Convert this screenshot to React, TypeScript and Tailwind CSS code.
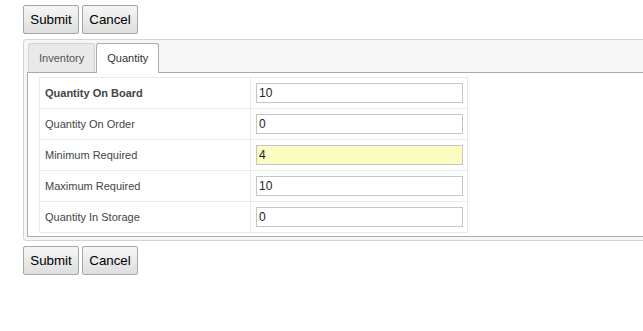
import React from "react";

const rows = [
  { label: "Quantity On Board", value: "10", bold: true, hl: false },
  { label: "Quantity On Order", value: "0", bold: false, hl: false },
  { label: "Minimum Required", value: "4", bold: false, hl: true },
  { label: "Maximum Required", value: "10", bold: false, hl: false },
  { label: "Quantity In Storage", value: "0", bold: false, hl: false },
];

function Buttons() {
  return (
    <div className="flex gap-[3px]">
      <button className="h-[29px] w-[56px] rounded-[2px] border border-[#a6a6a6] bg-gradient-to-b from-[#f6f6f6] to-[#dedede] text-[13.33px] text-black leading-none">
        Submit
      </button>
      <button className="h-[29px] w-[56px] rounded-[2px] border border-[#a6a6a6] bg-gradient-to-b from-[#f6f6f6] to-[#dedede] text-[13.33px] text-black leading-none">
        Cancel
      </button>
    </div>
  );
}

export default function App() {
  return (
    <div
      className="w-[643px] h-[331px] overflow-hidden bg-white pl-[23px] pt-[5px]"
      style={{ fontFamily: '"Liberation Sans", Arial, sans-serif' }}
    >
      <Buttons />
      <div className="mt-[5px] w-[660px] rounded-[3px] border border-[#d3d3d3] bg-[#f6f6f6] p-[3px] pt-0">
        <div className="flex h-[32px] items-end gap-[1px] pl-[1px]">
          <div className="relative top-0 flex h-[29px] items-center rounded-t-[3px] border border-b-0 border-[#d3d3d3] bg-[#e9e9e9] px-[10px] text-[11px] text-[#555]">
            Inventory
          </div>
          <div className="relative top-[1px] z-10 flex h-[30px] items-center rounded-t-[3px] border border-b-0 border-[#aaaaaa] bg-white px-[10px] pb-[1px] text-[11px] text-[#333]">
            Quantity
          </div>
        </div>
        <div className="border border-[#aaaaaa] bg-white px-[11px] pt-[4px] pb-[3px]">
          <div className="w-[429px] border border-[#e6eaf0]">
            {rows.map((r, i) => (
              <div
                key={r.label}
                className={
                  i < rows.length - 1
                    ? "flex h-[31px] border-b border-[#e6eaf0]"
                    : "flex h-[30px]"
                }
              >
                <div
                  className={
                    r.bold
                      ? "flex w-[211px] items-center border-r border-[#e6eaf0] pl-[5px] text-[11px] font-bold text-[#444]"
                      : "flex w-[211px] items-center border-r border-[#e6eaf0] pl-[5px] text-[11px] text-[#444]"
                  }
                >
                  {r.label}
                </div>
                <div className="flex items-center pl-[5px]">
                  <div
                    className={
                      r.hl
                        ? "flex h-[20px] w-[207px] items-center border border-[#c6c6c6] bg-[#fafcc2] pl-[2px] text-[12px] text-[#222]"
                        : "flex h-[20px] w-[207px] items-center border border-[#c6c6c6] bg-white pl-[2px] text-[12px] text-[#222]"
                    }
                  >
                    {r.value}
                  </div>
                </div>
              </div>
            ))}
          </div>
        </div>
      </div>
      <div className="mt-[5px]">
        <Buttons />
      </div>
    </div>
  );
}
